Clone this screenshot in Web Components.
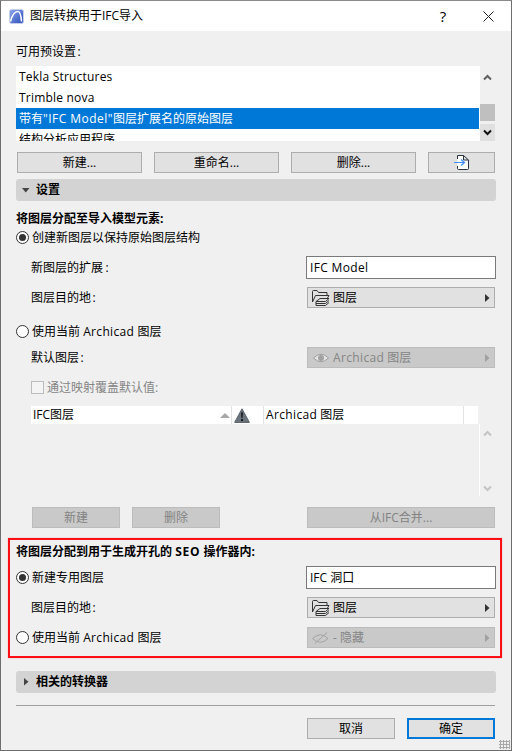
<!DOCTYPE html>
<html lang="zh">
<head>
<meta charset="utf-8">
<title>图层转换用于IFC导入</title>
<style>
html, body { margin: 0; padding: 0; background: #f0f0f0; }
body { font: 12px/16px "Open Sans", "Noto Sans CJK SC", sans-serif; color: #000; }
</style>
</head>
<body>

<ac-dialog heading="图层转换用于IFC导入">
  <ac-label style="margin-top:13px">可用预设置<ac-l colon>:</ac-l></ac-label>
  <ac-list style="margin-top:6px"></ac-list>

  <div style="display:grid;grid-template-columns:125px 125px 125px 67px;gap:12px;margin:11px 1px 0 1px">
    <ac-button>新建...</ac-button>
    <ac-button>重命名...</ac-button>
    <ac-button>删除...</ac-button>
    <ac-button><ac-icon name="import"></ac-icon></ac-button>
  </div>

  <ac-section open style="margin-top:6px">设置</ac-section>

  <ac-label bold style="margin-top:10px">将图层分配至导入模型元素:</ac-label>
  <ac-radio checked style="margin-top:4px">创建新图层以保持原始图层结构</ac-radio>

  <ac-row style="margin-top:12px" label="新图层的扩展<ac-l colon style='margin-left:2.5px'>:</ac-l>"><ac-input><ac-l>IFC Model</ac-l></ac-input></ac-row>
  <ac-row style="margin-top:8px" label="图层目的地<ac-l colon>:</ac-l>"><ac-popup icon="folder">图层</ac-popup></ac-row>

  <ac-radio style="margin-top:17px">使用当前 <ac-l>Archicad</ac-l> 图层</ac-radio>
  <ac-row style="margin-top:9px" label="默认图层<ac-l colon>:</ac-l>"><ac-popup icon="eye" disabled><ac-l>Archicad</ac-l> 图层</ac-popup></ac-row>

  <ac-check style="margin-top:13px">通过映射覆盖默认值:</ac-check>
  <ac-table style="margin-top:12px"></ac-table>

  <div style="display:flex;gap:12px;margin:11px 1px 0 16px">
    <ac-button disabled style="width:88px">新建</ac-button>
    <ac-button disabled style="width:88px">删除</ac-button>
    <ac-button disabled style="width:188px;margin-left:75px">从IFC合并...</ac-button>
  </div>

  <ac-callout style="margin-top:10px">
    <ac-label bold>将图层分配到用于生成开孔的 <ac-l style="letter-spacing:.8px">SEO</ac-l> 操作器内:</ac-label>
    <ac-row style="margin-top:6px"><ac-radio slot="lead" checked>新建专用图层</ac-radio><ac-input>IFC 洞口</ac-input></ac-row>
    <ac-row style="margin-top:8px" label="图层目的地<ac-l colon>:</ac-l>"><ac-popup icon="folder">图层</ac-popup></ac-row>
    <ac-row style="margin-top:9px"><ac-radio slot="lead">使用当前 <ac-l>Archicad</ac-l> 图层</ac-radio><ac-popup icon="eye-off" disabled>- 隐藏</ac-popup></ac-row>
  </ac-callout>

  <ac-section style="margin-top:13px">相关的转换器</ac-section>

  <div style="height:1px;background:#a0a0a0;margin:12px 1px 0 0"></div>

  <div style="display:flex;justify-content:flex-end;gap:12px;margin:12px 1px 0 0">
    <ac-button style="width:88px">取消</ac-button>
    <ac-button default style="width:88px">确定</ac-button>
  </div>
</ac-dialog>

<script>
const ICONS = {
  logo: `<svg width="15" height="15" viewBox="0 0 15 15"><defs><linearGradient id="g" x1="0" y1="0" x2="1" y2="1"><stop offset="0" stop-color="#8fa6ee"/><stop offset="1" stop-color="#2a4db8"/></linearGradient></defs><rect x=".5" y=".5" width="14" height="14" rx="2" fill="url(#g)" stroke="#c6cfe8"/><path d="M1.5 12.5C3 6.5 6 2.5 9 2.5 11 2.5 12 6 12.5 12.5" fill="none" stroke="#fff" stroke-width="1.5"/></svg>`,
  import: `<svg width="15" height="15" viewBox="0 0 15 15"><path d="M3.5 4V.5H9.5L14.5 5V13.5Q14.5 14.5 13.5 14.5H4.5Q3.5 14.5 3.5 13.5V11M9.5.5V5H14.5" fill="#fff" stroke="#2a3440"/><path d="M0 7.5H10M7 4.5L10.5 7.5 7 10.5" fill="none" stroke="#3f8cff" stroke-width="1.2"/></svg>`,
  folder: `<svg width="19" height="17" viewBox="0 1 19 17" fill="none" stroke="#333"><path d="M1.5 14V3.5Q1.5 2.5 2.5 2.5H6L7.5 4.5H16V7"/><path d="M1.5 14L4.5 7.5H18L16.5 10"/><path d="M5 13.5L9 10.5H18L14.5 13.5ZM5 15.5H14.5L18 12.5M5 17.5H14.5L18 14.5M5 13.5V17.5" stroke-width="1"/></svg>`,
  eye: `<svg width="16" height="10" viewBox="0 0 16 10"><path d="M.5 5Q8-2.5 15.5 5 8 12.5.5 5Z" fill="#e4e4e4" stroke="#9d9d9d"/><circle cx="8" cy="5" r="3" fill="#a2a2a2"/></svg>`,
  "eye-off": `<svg width="17" height="12" viewBox="0 0 17 12" fill="none" stroke="#a4a4a4"><path d="M.5 6.5Q8.5-1 16 6.5 8.5 14 .5 6.5Z"/><path d="M3 11.5L15 .5"/></svg>`,
  warn: `<svg width="16" height="15" viewBox="0 0 16 15"><path d="M8 .8L15.4 14.4H.6Z" fill="#6b747c" stroke="#59626a"/><path d="M7.1 4.5H8.9L8.5 10H7.5ZM7.1 11H8.9V13H7.1Z" fill="#111"/></svg>`
};

class AcIcon extends HTMLElement {
  connectedCallback() {
    const root = this.attachShadow({ mode: 'open' });
    root.innerHTML = `<style>:host{display:inline-flex;align-items:center;justify-content:center}</style>${ICONS[this.getAttribute('name')] || ''}`;
  }
}

// latin runs are a bit wider in the reference than in Open Sans
class AcL extends HTMLElement {
  connectedCallback() {
    const root = this.attachShadow({ mode: 'open' });
    root.innerHTML = `<style>:host{letter-spacing:.35px}:host([colon]){margin-left:1.5px;letter-spacing:0}</style><slot></slot>`;
  }
}

class AcDialog extends HTMLElement {
  connectedCallback() {
    const root = this.attachShadow({ mode: 'open' });
    root.innerHTML = `
      <style>
        :host { display:block; box-sizing:border-box; width:512px; height:751px; background:#f0f0f0; border:1px solid #6e6e6e; border-top-color:#8a8a8a; position:relative; overflow:hidden; }
        header { display:flex; align-items:center; height:30px; background:#fff; padding-left:8px; }
        h1 { font:inherit; margin:0 0 0 6px; flex:1; }
        .help { width:26px; text-align:center; font-size:15px; margin-right:27px; }
        .close { margin-right:17px; display:flex; }
        main { padding:0 15px; display:flex; flex-direction:column; }
        .grip { position:absolute; right:1px; bottom:1px; width:11px; height:9px; background:radial-gradient(circle,#a8a8a8 1px,transparent 1.2px) 0 0/3px 3px; }
      </style>
      <header>
        <ac-icon name="logo"></ac-icon>
        <h1>${this.getAttribute('heading')}</h1>
        <div class="help">?</div>
        <div class="close"><svg width="11" height="11" viewBox="0 0 11 11"><path d="M.5.5L10.5 10.5M10.5.5L.5 10.5" stroke="#222" fill="none"/></svg></div>
      </header>
      <main><slot></slot></main>
      <div class="grip"></div>`;
  }
}

class AcLabel extends HTMLElement {
  connectedCallback() {
    const root = this.attachShadow({ mode: 'open' });
    root.innerHTML = `<style>:host{display:block;height:16px;line-height:16px;white-space:nowrap}:host([bold]){font-weight:700}</style><slot></slot>`;
  }
}

class AcList extends HTMLElement {
  connectedCallback() {
    const root = this.attachShadow({ mode: 'open' });
    root.innerHTML = `
      <style>
        :host { display:flex; height:75px; width:480px; }
        ul { list-style:none; margin:0; padding:0; width:464px; background:#fff; overflow:hidden; }
        li { height:21px; line-height:21px; padding-left:3px; white-space:nowrap; }
        li.sel { background:#0078d7; color:#fff; margin-right:1px; }
        .sp { letter-spacing:.2px; }
        .sq { letter-spacing:.45px; }
        .bar { width:15px; margin-right:1px; position:relative; }
        .bar div { position:absolute; left:0; width:15px; }
        .up { top:3px; height:16px; text-align:center; }
        .thumb { top:38px; height:17px; background:#bfbfbf; }
        .down { top:58px; height:17px; background:#e0e0e0; display:flex; align-items:center; justify-content:center; }
      </style>
      <ul>
        <li class="sp">Tekla Structures</li>
        <li class="sp">Trimble nova</li>
        <li class="sel">带有<span class="sq">"IFC Model"</span>图层扩展名的原始图层</li>
        <li>结构分析应用程序</li>
      </ul>
      <div class="bar">
        <div class="up"><svg width="9" height="7" viewBox="0 0 9 7"><path d="M1 5.5L4.5 2 8 5.5" fill="none" stroke="#606060" stroke-width="2"/></svg></div>
        <div class="thumb"></div>
        <div class="down"><svg width="9" height="7" viewBox="0 0 9 7"><path d="M1 1.5L4.5 5 8 1.5" fill="none" stroke="#111" stroke-width="2"/></svg></div>
      </div>`;
  }
}

class AcButton extends HTMLElement {
  connectedCallback() {
    const root = this.attachShadow({ mode: 'open' });
    root.innerHTML = `
      <style>
        :host { display:flex; box-sizing:border-box; height:21px; align-items:center; justify-content:center; background:#e1e1e1; border:1px solid #adadad; white-space:nowrap; }
        :host([disabled]) { background:#c9c9c9; border-color:#bcbcbc; color:#838383; }
        :host([default]) { border:2px solid #0078d7; }
      </style><slot></slot>`;
  }
}

class AcSection extends HTMLElement {
  connectedCallback() {
    const root = this.attachShadow({ mode: 'open' });
    const arrow = this.hasAttribute('open')
      ? `<svg width="8" height="5" viewBox="0 0 8 5"><path d="M0 0H7.5L3.75 4.5Z" fill="#444"/></svg>`
      : `<svg width="5" height="8" viewBox="0 0 5 8"><path d="M0 0V7.5L4.5 3.75Z" fill="#444"/></svg>`;
    root.innerHTML = `
      <style>
        :host { display:flex; height:22px; width:480px; align-items:center; background:#d3d3d3; border-radius:3px; font-weight:700; }
        .a { width:20px; display:flex; justify-content:center; }
      </style><span class="a">${arrow}</span><slot></slot>`;
  }
}

class AcRadio extends HTMLElement {
  connectedCallback() {
    const root = this.attachShadow({ mode: 'open' });
    root.innerHTML = `
      <style>
        :host { display:flex; height:13px; align-items:center; white-space:pre; }
        i { box-sizing:border-box; width:13px; height:13px; margin-right:3px; border:1px solid #333; border-radius:50%; background:#fff; display:flex; align-items:center; justify-content:center; flex:none; }
        b { width:7px; height:7px; border-radius:50%; background:#333; }
      </style><i>${this.hasAttribute('checked') ? '<b></b>' : ''}</i><span><slot></slot></span>`;
  }
}

class AcCheck extends HTMLElement {
  connectedCallback() {
    const root = this.attachShadow({ mode: 'open' });
    root.innerHTML = `
      <style>
        :host { display:flex; height:13px; align-items:center; padding-left:15px; color:#858585; white-space:nowrap; }
        i { box-sizing:border-box; width:13px; height:13px; margin-right:3px; border:1px solid #bcbcbc; background:#f4f4f4; flex:none; }
      </style><i></i><slot></slot>`;
  }
}

class AcRow extends HTMLElement {
  connectedCallback() {
    const root = this.attachShadow({ mode: 'open' });
    const label = this.getAttribute('label');
    root.innerHTML = `
      <style>
        :host { display:grid; grid-template-columns:290px 190px; align-items:center; }
        .label { padding-left:15px; white-space:nowrap; }
      </style>
      ${label ? `<div class="label">${label}</div>` : '<slot name="lead"></slot>'}
      <slot></slot>`;
  }
}

class AcInput extends HTMLElement {
  connectedCallback() {
    const root = this.attachShadow({ mode: 'open' });
    root.innerHTML = `
      <style>
        :host { display:block; box-sizing:border-box; height:23px; line-height:21px; padding-left:3px; background:#fff; border:1px solid #7a7a7a; white-space:nowrap; }
      </style><slot></slot>`;
  }
}

class AcPopup extends HTMLElement {
  connectedCallback() {
    const root = this.attachShadow({ mode: 'open' });
    const dis = this.hasAttribute('disabled');
    root.innerHTML = `
      <style>
        :host { display:flex; box-sizing:border-box; height:21px; margin:0 1px; align-items:center; background:#e1e1e1; border:1px solid #adadad; white-space:nowrap; }
        :host([disabled]) { background:#c9c9c9; border-color:#bcbcbc; color:#858585; }
        .i { width:19px; margin:0 3px 0 3px; display:flex; justify-content:center; }
        .t { flex:1; }
        svg.arr { margin-right:4px; }
      </style>
      <span class="i"><ac-icon name="${this.getAttribute('icon')}"></ac-icon></span>
      <span class="t"><slot></slot></span>
      <svg class="arr" width="5" height="8" viewBox="0 0 5 8"><path d="M0 0V8L4.5 4Z" fill="${dis ? '#a0a0a0' : '#333'}"/></svg>`;
  }
}

class AcTable extends HTMLElement {
  connectedCallback() {
    const root = this.attachShadow({ mode: 'open' });
    root.innerHTML = `
      <style>
        :host { display:block; height:90px; margin-left:15px; width:457px; position:relative; }
        .head { display:grid; grid-template-columns:201px 32px 200px 14px; height:18px; line-height:18px; width:447px; background:#fff; white-space:nowrap; }
        .head > div { border-right:1px solid #e2e2e2; box-sizing:border-box; padding-left:2px; display:flex; align-items:center; justify-content:space-between; }
        .head > div:last-child { border-right:0; }
        .tri { margin-right:1px; }
        .warn { justify-content:flex-start !important; padding-left:2px; }
        .track { position:absolute; left:448px; top:18px; width:1px; height:72px; background:#fff; }
        .up, .down { position:absolute; left:452px; }
        .up { top:24px; } .down { top:79px; }
      </style>
      <div class="head">
        <div>IFC图层<svg class="tri" width="10" height="5" viewBox="0 0 10 5"><path d="M5 0L10 5H0Z" fill="#a8a8a8"/></svg></div>
        <div class="warn"><ac-icon name="warn"></ac-icon></div>
        <div><span><ac-l>Archicad</ac-l> 图层</span></div>
        <div></div>
      </div>
      <div class="track"></div>
      <svg class="up" width="9" height="7" viewBox="0 0 9 7"><path d="M1 5.5L4.5 2 8 5.5" fill="none" stroke="#c4c4c4" stroke-width="2"/></svg>
      <svg class="down" width="9" height="7" viewBox="0 0 9 7"><path d="M1 1.5L4.5 5 8 1.5" fill="none" stroke="#c4c4c4" stroke-width="2"/></svg>`;
  }
}

class AcCallout extends HTMLElement {
  connectedCallback() {
    const root = this.attachShadow({ mode: 'open' });
    root.innerHTML = `
      <style>
        :host { display:block; box-sizing:border-box; height:120px; margin:0 -6px 0 -8px; padding:4px 4px 0 6px; border:2px solid #fb0f17; box-shadow:0 0 1px rgba(255,60,60,.6); }
      </style><slot></slot>`;
  }
}

customElements.define('ac-icon', AcIcon);
customElements.define('ac-l', AcL);
customElements.define('ac-dialog', AcDialog);
customElements.define('ac-label', AcLabel);
customElements.define('ac-list', AcList);
customElements.define('ac-button', AcButton);
customElements.define('ac-section', AcSection);
customElements.define('ac-radio', AcRadio);
customElements.define('ac-check', AcCheck);
customElements.define('ac-row', AcRow);
customElements.define('ac-input', AcInput);
customElements.define('ac-popup', AcPopup);
customElements.define('ac-table', AcTable);
customElements.define('ac-callout', AcCallout);
</script>
</body>
</html>
